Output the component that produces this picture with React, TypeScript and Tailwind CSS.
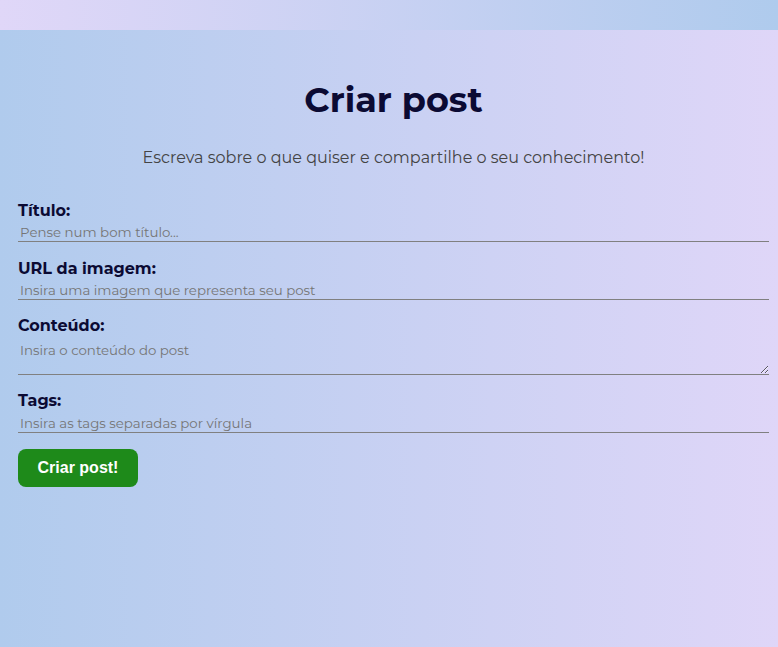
import React, { useState } from "react";

const labelClass = "text-[16px] font-bold leading-[24px] text-[#0b0a33]";
const fieldClass =
  "w-full bg-transparent border-0 border-b border-[#808080] px-[2px] text-[13.333px] text-[#333] placeholder:text-[#757575] outline-none";

const App: React.FC = () => {
  const [form, setForm] = useState({ title: "", image: "", content: "", tags: "" });

  const handleChange = (
    e: React.ChangeEvent<HTMLInputElement | HTMLTextAreaElement>
  ) => {
    const { name, value } = e.target;
    setForm((prev) => ({ ...prev, [name]: value }));
  };

  return (
    <div className="min-h-[647px] font-['Montserrat','DejaVu_Sans',sans-serif]">
      <div className="h-[30px] bg-gradient-to-r from-[#e0d7f8] to-[#afcbed]" />
      <main className="min-h-[617px] bg-gradient-to-r from-[#b0cbed] to-[#dfd6f8] pl-[18px] pr-[9px] pt-[48px]">
        <h1 className="text-center text-[35px] font-bold leading-[44px] text-[#0b0a33]">
          Criar post
        </h1>
        <p className="mt-[24px] text-center text-[16px] leading-[24px] text-[#444]">
          Escreva sobre o que quiser e compartilhe o seu conhecimento!
        </p>
        <form
          className="mt-[29px] flex flex-col"
          onSubmit={(e) => e.preventDefault()}
        >
          <label className={labelClass} htmlFor="title">
            Título:
          </label>
          <input
            id="title"
            name="title"
            value={form.title}
            onChange={handleChange}
            placeholder="Pense num bom título..."
            className={`${fieldClass} h-[19px] pt-[2px]`}
          />
          <label className={`${labelClass} mt-[15px]`} htmlFor="image">
            URL da imagem:
          </label>
          <input
            id="image"
            name="image"
            value={form.image}
            onChange={handleChange}
            placeholder="Insira uma imagem que representa seu post"
            className={`${fieldClass} h-[19px] pt-[2px]`}
          />
          <label className={`${labelClass} mt-[14px]`} htmlFor="content">
            Conteúdo:
          </label>
          <textarea
            id="content"
            name="content"
            value={form.content}
            onChange={handleChange}
            placeholder="Insira o conteúdo do post"
            className={`${fieldClass} h-[37px] pt-[4px] leading-[16px]`}
          />
          <label className={`${labelClass} mt-[14px]`} htmlFor="tags">
            Tags:
          </label>
          <input
            id="tags"
            name="tags"
            value={form.tags}
            onChange={handleChange}
            placeholder="Insira as tags separadas por vírgula"
            className={`${fieldClass} h-[20px]`}
          />
          <button
            type="submit"
            className="mt-[16px] h-[38px] w-[120px] rounded-[8px] bg-[#1e8a1a] font-['Liberation_Sans',Arial,sans-serif] text-[16px] font-bold text-white"
          >
            Criar post!
          </button>
        </form>
      </main>
    </div>
  );
};

export default App;
